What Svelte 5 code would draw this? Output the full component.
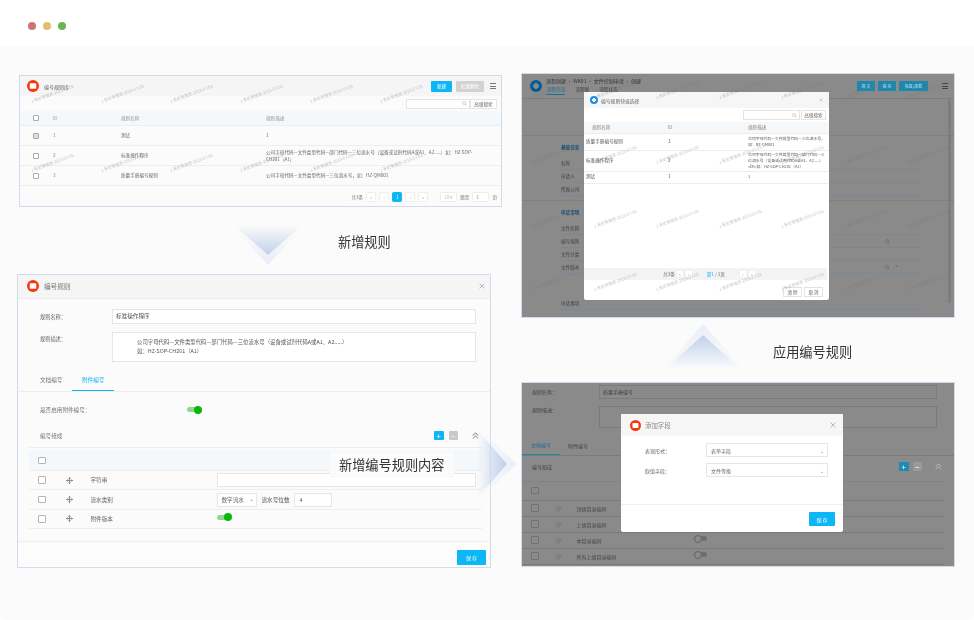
<script lang="ts">
  const markText = '1 系统管理员-2023-07-05';
  const marksA = [0, 1, 2, 3, 4, 5].flatMap((i) => [
    { x: 11 + i * 69.7, y: 22 },
    { x: 11 + i * 69.7, y: 91 },
  ]);
  const marksC = [0, 1, 2, 3, 4, 5, 6].flatMap((i) => [
    { x: 9 + i * 62.6, y: 20 },
    { x: 9 + i * 62.6, y: 85 },
    { x: 9 + i * 62.6, y: 149 },
    { x: 9 + i * 62.6, y: 212 },
  ]);

  const ruleRows = [
    { id: 1, name: '测试', desc: '1', checked: true },
    { id: 2, name: '标准操作程序', desc: '公司字母代码—文件类型代码—部门代码—三位流水号（设备或试剂代码A或A1、A2.....）如：HZ-SOP-CH201（A1）', checked: false },
    { id: 3, name: '质量手册编号规则', desc: '公司字母代码—文件类型代码—三位流水号，如：HZ-QM001', checked: false },
  ];
  const pickRows = [
    { name: '质量手册编号规则', id: 3, desc: '公司字母代码—文件类型代码—三位流水号，如：RZ-QM001', h: 17 },
    { name: '标准操作程序', id: 2, desc: '公司字母代码—文件类型代码—部门代码—三位流水号（设备或试剂代码A或A1、A2.....）<br>如：HZ-SOP-CH201（A1）', h: 20.5 },
    { name: '测试', id: 1, desc: '1', h: 12 },
  ];
  const cFields = ['名称', '申请人', '所属公司'];
  const cFields2 = [
    { label: '文件名称' },
    { label: '编号规则', find: true },
    { label: '文件分类' },
    { label: '文件版本', find: true, star: true },
  ];
  const dRows = ['顶级目录编码', '上级目录编码', '本目录编码', '所有上级目录编码'];
</script>

{#snippet logo(size)}
  <svg class="logo" width={size} height={size} viewBox="0 0 24 24" aria-hidden="true">
    <circle cx="12" cy="12" r="12" fill="#f8350e" />
    <rect x="5.5" y="6.5" width="13" height="11" rx="1.5" fill="#fff" />
  </svg>
{/snippet}

{#snippet move()}
  <svg class="move" width="7" height="7" viewBox="0 0 14 14" fill="none" stroke="#777" stroke-width="1.6" aria-hidden="true">
    <path d="M7 0.5V13.5M0.5 7H13.5M5 3L7 1L9 3M5 11L7 13L9 11M3 5L1 7L3 9M11 5L13 7L11 9" />
  </svg>
{/snippet}

{#snippet cross(size)}
  <svg class="cross" width={size} height={size} viewBox="0 0 10 10" stroke="#999" stroke-width="1.1" aria-hidden="true">
    <path d="M1 1L9 9M9 1L1 9" />
  </svg>
{/snippet}

{#snippet chevUp()}
  <svg width="7" height="7" viewBox="0 0 10 10" fill="none" stroke="#aaa" stroke-width="1.5" aria-hidden="true">
    <path d="M1 5L5 1.5L9 5M1 9L5 5.5L9 9" />
  </svg>
{/snippet}

{#snippet search()}
  <svg width="5" height="5" viewBox="0 0 10 10" fill="none" stroke="#bbb" stroke-width="1.3" aria-hidden="true">
    <circle cx="4" cy="4" r="3" /><path d="M6.5 6.5L9.5 9.5" />
  </svg>
{/snippet}

<div class="page">
  <header class="top">
    <i class="dot red"></i><i class="dot yellow"></i><i class="dot green"></i>
  </header>

  <main class="canvas">
    <!-- list of rules -->
    <section class="shot shot-a">
      {#each marksA as m}
        <span class="mark" style="left:{m.x}px;top:{m.y}px">{markText}</span>
      {/each}
      <div class="a-head">
        {@render logo(12)}
        <span class="a-title">编号规则库</span>
        <span class="a-new">新建</span>
        <span class="a-gray">批量删除</span>
        <span class="menu-ic"><i></i><i></i><i></i></span>
      </div>
      <div class="a-tools">
        <span class="a-search">{@render search()}</span>
        <span class="a-adv">高级搜索</span>
      </div>
      <div class="a-row a-th">
        <i class="box"></i><span>ID</span><span>规则名称</span><span>规则描述</span>
      </div>
      {#each ruleRows as r}
        <div class="a-row">
          <i class="box" class:checked={r.checked}></i><span>{r.id}</span><span class="dk">{r.name}</span><span class="dk a-desc">{r.desc}</span>
        </div>
      {/each}
      <div class="a-pager">
        <span>共3条</span>
        <b class="pg">«</b><b class="pg">‹</b><b class="pg on">1</b><b class="pg">›</b><b class="pg">»</b>
        <b class="pg wide">10 ▾</b>
        <span>跳至</span>
        <b class="pg jump">1</b>
        <span>页</span>
      </div>
    </section>

    <!-- rule editor -->
    <section class="shot shot-b">
      <div class="b-head">
        {@render logo(12)}
        <span class="b-title">编号规则</span>
        {@render cross(6)}
      </div>
      <div class="b-form">
        <div class="b-line"><span class="b-label">规则名称：</span><div class="field">标准操作程序</div></div>
        <div class="b-line top-al">
          <span class="b-label">规则描述：</span>
          <div class="field area">公司字母代码—文件类型代码—部门代码—三位流水号（设备或试剂代码A或A1、A2.....）<br />如：HZ-SOP-CH201（A1）</div>
        </div>
      </div>
      <div class="b-tabs">
        <span>文档编号</span>
        <span class="active">附件编号</span>
      </div>
      <div class="b-switch"><span>是否启用附件编号：</span><i class="toggle on"></i></div>
      <div class="b-comp">
        <span>编号组成</span>
        <b class="sq blue">+</b><b class="sq gray">−</b>
        <span class="chev">{@render chevUp()}</span>
      </div>
      <div class="b-table">
        <div class="b-tr b-th"><i class="box big"></i></div>
        <div class="b-tr"><i class="box big"></i>{@render move()}<span class="nm">字符串</span><div class="inp full"></div></div>
        <div class="b-tr">
          <i class="box big"></i>{@render move()}<span class="nm">流水类别</span>
          <div class="inp sel">数字流水 <em>⌄</em></div><span class="lbl">流水号位数</span><div class="inp num">4</div>
        </div>
        <div class="b-tr short"><i class="box big"></i>{@render move()}<span class="nm">附件版本</span><i class="toggle on up"></i></div>
      </div>
      <div class="b-foot"><span class="save">保 存</span></div>
    </section>

    <!-- applying a rule -->
    <section class="shot dark shot-c">
      {#each marksC as m}
        <span class="mark" style="left:{m.x}px;top:{m.y}px">{markText}</span>
      {/each}
      <div class="c-head">
        <i class="c-logo"></i>
        <div class="c-titles">
          <span class="c-title">流程创建 · WK01 · 文件控制申请 · 创建</span>
          <div class="c-tabs"><span class="active">流程信息</span><span>流程图</span><span>流程状态</span></div>
        </div>
        <b class="c-btn">提 交</b><b class="c-btn">保 存</b><b class="c-btn long">恢复/加载</b>
        <span class="menu-ic dk"><i></i><i></i><i></i></span>
      </div>
      <div class="c-rule first"></div>
      <div class="c-section">基础信息</div>
      {#each cFields as label}
        <div class="c-field"><span>{label}</span></div>
      {/each}
      <div class="c-rule second"></div>
      <div class="c-section">申请事项</div>
      {#each cFields2 as f}
        <div class="c-field">
          <span>{f.label}</span>
          {#if f.find}<span class="c-find">{@render search()}</span>{/if}
          {#if f.star}<span class="c-star">*</span>{/if}
        </div>
      {/each}
      <div class="c-field last"><span>申请事项</span></div>
      <i class="c-scroll"></i>

      <div class="modal c-modal">
        <div class="m-head c">
          <i class="c-logo sm"></i><span>编号规则快速选择</span>{@render cross(4)}
        </div>
        <div class="c-tools">
          <span class="a-search c">{@render search()}</span>
          <span class="a-adv c">高级搜索</span>
        </div>
        <div class="c-tr c-th"><span>规则名称</span><span>ID</span><span>规则描述</span></div>
        {#each pickRows as r}
          <div class="c-tr" style="height:{r.h}px">
            <span>{r.name}</span><span>{r.id}</span><span class="c-desc">{r.desc}</span>
          </div>
        {/each}
        <div class="c-fill"></div>
        <div class="c-pager">
          <span>共3条</span><b class="pg">«</b><b class="pg">‹</b>
          <span class="c-num"><em>第1</em> / 1页</span>
          <b class="pg">›</b><b class="pg">»</b>
        </div>
        <div class="c-foot"><b class="ghost">清 除</b><b class="ghost">取 消</b></div>
      </div>
    </section>

    <!-- add field -->
    <section class="shot dark shot-d">
      <div class="d-line"><span>规则名称：</span><div class="d-inp">质量手册编号</div></div>
      <div class="d-line area"><span>规则描述：</span><div class="d-inp tall"></div></div>
      <div class="d-tabs"><span class="active">文档编号</span><span>附件编号</span></div>
      <div class="d-comp">
        <span>编号组成</span>
        <b class="sq blue dim">+</b><b class="sq gray dim">−</b>
        <span class="chev">{@render chevUp()}</span>
      </div>
      <div class="d-th"><i class="box big"></i></div>
      {#each dRows as name, i}
        <div class="d-tr">
          <i class="box big"></i>{@render move()}<span class="nm">{name}</span>
          {#if i > 1}<i class="toggle off"></i>{/if}
        </div>
      {/each}

      <div class="modal d-modal">
        <div class="m-head d">
          {@render logo(11)}<span>添加字段</span>{@render cross(6)}
        </div>
        <div class="d-form">
          <div class="d-pick"><span>表现形式：</span><div class="inp pick">表单字段 <em>⌄</em></div></div>
          <div class="d-pick"><span>取值字段：</span><div class="inp pick">文件等级 <em>⌄</em></div></div>
        </div>
        <div class="d-foot"><span class="save">保 存</span></div>
      </div>
    </section>

    <!-- arrows -->
    <svg class="arrow ar-down" width="110" height="56" viewBox="0 0 110 56" aria-hidden="true">
      <defs>
        <linearGradient id="gd" x1="0" y1="0" x2="0" y2="1">
          <stop offset="0.3" stop-color="#c0d0ea" stop-opacity="0" />
          <stop offset="1" stop-color="#c0d0ea" />
        </linearGradient>
        <linearGradient id="gdo" x1="0" y1="0" x2="0" y2="1">
          <stop offset="0.4" stop-color="#e6ecf6" stop-opacity="0" />
          <stop offset="1" stop-color="#e6ecf6" />
        </linearGradient>
        <linearGradient id="gu" x1="0" y1="1" x2="0" y2="0">
          <stop offset="0.25" stop-color="#c0d0ea" stop-opacity="0" />
          <stop offset="1" stop-color="#c0d0ea" />
        </linearGradient>
        <linearGradient id="guo" x1="0" y1="1" x2="0" y2="0">
          <stop offset="0.2" stop-color="#e9eef7" stop-opacity="0" />
          <stop offset="1" stop-color="#e9eef7" />
        </linearGradient>
        <linearGradient id="gr" x1="0" y1="0" x2="1" y2="0">
          <stop offset="0.25" stop-color="#c0d0ea" stop-opacity="0" />
          <stop offset="1" stop-color="#c0d0ea" />
        </linearGradient>
        <linearGradient id="gro" x1="0" y1="0" x2="1" y2="0">
          <stop offset="0.3" stop-color="#e9eef7" stop-opacity="0" />
          <stop offset="1" stop-color="#e9eef7" />
        </linearGradient>
      </defs>
      <path d="M7 0H103L55 52Z" fill="url(#gdo)" />
      <path d="M7 0H103L55 42Z" fill="#fbfbfb" />
      <path d="M7 0H103L55 42Z" fill="url(#gd)" />
    </svg>
    <svg class="arrow ar-up" width="110" height="56" viewBox="0 0 110 56" aria-hidden="true">
      <path d="M5 56L55 0L105 56Z" fill="url(#guo)" />
      <path d="M5 56L55 11L105 56Z" fill="#fbfbfb" />
      <path d="M5 56L55 11L105 56Z" fill="url(#gu)" />
    </svg>
    <svg class="arrow ar-right" width="52" height="92" viewBox="0 0 52 92" aria-hidden="true">
      <path d="M0 0L50 46L0 92Z" fill="url(#gro)" />
      <path d="M0 0L40 46L0 92Z" fill="url(#gr)" />
    </svg>

    <span class="cap cap-1">新增规则</span>
    <span class="cap cap-2">新增编号规则内容</span>
    <span class="cap cap-3">应用编号规则</span>
  </main>
</div>

<style>
  :global(body) {
    margin: 0;
    background: #fff;
  }

  .page {
    width: 974px;
    height: 620px;
    display: flex;
    flex-direction: column;
    font-family: "Noto Sans CJK SC", "Liberation Sans", sans-serif;
    color: #555;
    overflow: hidden;
  }

  .top {
    height: 47px;
    flex: none;
    display: flex;
    align-items: center;
    gap: 7px;
    padding: 5px 0 0 28px;
    box-sizing: border-box;
    background: #fff;
  }

  .dot {
    width: 8px;
    height: 8px;
    border-radius: 50%;
    filter: blur(0.3px);
  }
  .red { background: #cd7474; }
  .yellow { background: #e5bd6f; }
  .green { background: #67b755; }

  .canvas {
    position: relative;
    flex: 1;
    background: #fbfbfb;
    border-radius: 0 0 8px 8px;
  }

  .shot {
    position: absolute;
    box-sizing: border-box;
    overflow: hidden;
    border: 1px solid #d0dbed;
    background: #fbfbfb;
    filter: blur(0.5px);
  }
  .dark {
    background: #8a8a8a;
    color: #3f3f3f;
  }

  .shot-a { left: 19px; top: 28px; width: 483px; height: 132px; font-size: 4.6px; }
  .shot-b {
    left: 17px;
    top: 227px;
    width: 474px;
    height: 294px;
    font-size: 5.6px;
    display: flex;
    flex-direction: column;
  }
  .shot-c { left: 521px; top: 26px; width: 434px; height: 245px; font-size: 4.6px; }
  .shot-d { left: 521px; top: 335px; width: 434px; height: 185px; font-size: 5px; }

  .mark {
    position: absolute;
    font-size: 4px;
    white-space: nowrap;
    color: rgba(120, 120, 120, 0.45);
    transform: rotate(-20deg);
    transform-origin: left center;
    z-index: 3;
    pointer-events: none;
  }

  .logo, .cross, .move { flex: none; }

  .box {
    display: block;
    width: 4px;
    height: 4px;
    border: 0.7px solid #aaa;
    border-radius: 1px;
    background: #fff;
    flex: none;
  }
  .box.checked { background: #ddd; }
  .box.big {
    width: 5.5px;
    height: 5.5px;
    border: 0.8px solid #b5b5b5;
  }
  .dark .box { background: transparent; border-color: #707070; }

  .menu-ic {
    display: flex;
    flex-direction: column;
    gap: 1.4px;
    width: 6px;
  }
  .menu-ic i {
    height: 0.8px;
    background: #777;
  }

  /* panel a */
  .a-head {
    height: 20px;
    display: flex;
    align-items: center;
    padding: 0 5px 0 7px;
    background: #f5f5f5;
  }
  .a-title { margin-left: 5px; flex: 1; color: #666; font-size: 5px; }
  .a-new, .a-gray {
    height: 11px;
    display: flex;
    align-items: center;
    justify-content: center;
    border-radius: 1px;
    color: #fff;
    background: #0db7f5;
  }
  .a-new { width: 21px; margin-right: 4px; }
  .a-gray { width: 28px; margin-right: 6px; background: #d2d2d2; }

  .a-tools {
    height: 15px;
    display: flex;
    align-items: center;
    justify-content: flex-end;
    padding-right: 4px;
  }
  .a-search {
    width: 64px;
    height: 10px;
    box-sizing: border-box;
    border: 0.6px solid #e4e4e4;
    display: flex;
    align-items: center;
    justify-content: flex-end;
    padding-right: 2px;
    background: #fff;
  }
  .a-adv {
    width: 27px;
    height: 10px;
    box-sizing: border-box;
    border: 0.6px solid #e4e4e4;
    display: flex;
    align-items: center;
    justify-content: center;
    color: #666;
    background: #fff;
  }

  .a-row {
    display: grid;
    grid-template-columns: 33px 68px 145px 1fr;
    align-items: center;
    height: 20px;
    box-sizing: border-box;
    border-bottom: 0.7px solid #eee;
    color: #888;
    line-height: 7px;
  }
  .a-row .box { margin-left: 13px; }
  .a-th { height: 15px; background: #f4f8fb; color: #999; }
  .dk { color: #666; }
  .a-desc { padding-right: 26px; }

  .a-pager {
    height: 21px;
    display: flex;
    align-items: center;
    justify-content: flex-end;
    gap: 3px;
    padding-right: 4px;
    color: #777;
  }
  .pg {
    width: 10px;
    height: 10px;
    box-sizing: border-box;
    border: 0.6px solid #eee;
    border-radius: 1.5px;
    display: flex;
    align-items: center;
    justify-content: center;
    font-weight: 400;
    color: #bbb;
    background: #fff;
  }
  .pg.on { background: #0db7f5; border-color: #0db7f5; color: #fff; }
  .pg.wide { width: 17px; margin-left: 9px; }
  .pg.jump { width: 17px; justify-content: flex-start; padding-left: 3px; color: #888; }

  /* panel b */
  .b-head {
    height: 23.5px;
    flex: none;
    box-sizing: border-box;
    display: flex;
    align-items: center;
    padding: 0 5px 0 9px;
    background: #f5f5f5;
    border-bottom: 0.7px solid #ececec;
  }
  .b-title { flex: 1; margin-left: 5px; font-size: 6.6px; color: #777; }
  .b-form { padding: 10px 14px 0 22px; flex: none; }
  .b-line {
    display: flex;
    align-items: center;
    margin-bottom: 8px;
  }
  .b-line.top-al { align-items: flex-start; }
  .b-label { width: 72px; flex: none; color: #666; font-size: 5.2px; }
  .top-al .b-label { padding-top: 3px; }
  .field {
    flex: 1;
    height: 15px;
    box-sizing: border-box;
    border: 0.7px solid #e6e6e6;
    background: #fff;
    display: flex;
    align-items: center;
    padding-left: 3px;
    color: #555;
  }
  .field.area {
    display: block;
    height: 30px;
    padding: 5px 0 0 24px;
    line-height: 9px;
    font-size: 5.4px;
  }

  .b-tabs {
    height: 22px;
    flex: none;
    padding-left: 12px;
    display: flex;
    align-items: flex-end;
    border-bottom: 0.7px solid #eee;
    box-sizing: border-box;
    color: #777;
  }
  .b-tabs span {
    padding: 0 10px 6px;
    border-bottom: 1px solid transparent;
    margin-bottom: -0.7px;
    width: 22px;
    text-align: center;
    white-space: nowrap;
  }
  .b-tabs .active { color: #0db7f5; border-color: #0db7f5; }

  .b-switch {
    height: 36px;
    flex: none;
    display: flex;
    align-items: center;
    padding-left: 22px;
    color: #777;
  }
  .b-switch span { width: 147px; }

  .toggle {
    position: relative;
    display: block;
    width: 14px;
    height: 4.5px;
    border-radius: 3px;
    flex: none;
  }
  .toggle::after {
    content: "";
    position: absolute;
    top: -1.75px;
    width: 8px;
    height: 8px;
    border-radius: 50%;
  }
  .toggle.on { background: #8fd68f; }
  .toggle.on::after { right: -1px; background: #07b807; }
  .toggle.up { margin-top: -3px; }
  .toggle.off { background: #6f6f6f; margin-left: 117px; width: 13px; margin-top: -3px; }
  .toggle.off::after { left: 0; background: #8a8a8a; border: 0.7px solid #666; box-sizing: border-box; }

  .b-comp {
    height: 16px;
    flex: none;
    display: flex;
    align-items: center;
    padding-left: 22px;
    color: #777;
  }
  .b-comp > span:first-child { flex: 1; }
  .sq {
    width: 9.5px;
    height: 9.5px;
    margin-right: 5px;
    border-radius: 1px;
    color: #fff;
    display: flex;
    align-items: center;
    justify-content: center;
    font-size: 8px;
    font-weight: 400;
    line-height: 1;
  }
  .sq.blue { background: #0db7f5; }
  .sq.gray { background: #c9c9c9; }
  .sq.blue.dim { background: #1a8bb5; }
  .sq.gray.dim { background: #9a9a9a; }
  .chev { width: 20px; display: flex; align-items: center; padding-left: 9px; box-sizing: border-box; }
  .b-comp .chev { margin-right: 7px; }

  .b-table {
    margin: 3px 8px 0 11px;
    border-top: 0.7px solid #eee;
    padding-top: 3.5px;
    flex: 1;
    min-height: 0;
    overflow: hidden;
    box-sizing: border-box;
  }
  .b-tr {
    height: 19.7px;
    box-sizing: border-box;
    display: flex;
    align-items: center;
    padding-left: 9px;
    border-bottom: 0.7px solid #eee;
  }
  .b-tr.short { height: 18.5px; }
  .b-th { background: #f4f8fb; }
  .move { margin-left: 20px; }
  .nm { width: 126px; margin-left: 18px; color: #666; white-space: nowrap; flex: none; }
  .inp {
    height: 14px;
    box-sizing: border-box;
    border: 0.7px solid #e6e6e6;
    background: #fff;
    display: flex;
    align-items: center;
    padding-left: 4px;
    color: #666;
    white-space: nowrap;
  }
  .inp.full { width: 259px; }
  .inp.sel { width: 40px; justify-content: space-between; padding-right: 2px; }
  .inp em { font-style: normal; color: #888; line-height: 1; }
  .lbl { margin: 0 5px; }
  .inp.num { width: 38px; }

  .b-foot {
    flex: none;
    height: 26px;
    box-sizing: border-box;
    border-top: 0.7px solid #eee;
    display: flex;
    justify-content: flex-end;
    padding: 7.5px 4px 0 0;
    background: #fcfcfc;
  }
  .save {
    width: 29px;
    height: 15.5px;
    display: flex;
    align-items: center;
    justify-content: center;
    background: #0db7f5;
    color: #fff;
    border-radius: 1px;
    font-size: 5px;
  }

  /* modals */
  .modal {
    position: absolute;
    background: #fff;
    border-radius: 2px;
    display: flex;
    flex-direction: column;
    z-index: 2;
    color: #666;
  }
  .m-head {
    display: flex;
    align-items: center;
    background: #f6f6f6;
    flex: none;
  }
  .m-head span { flex: 1; }

  /* panel c */
  .c-head {
    height: 24px;
    display: flex;
    align-items: center;
    padding: 0 6px 0 8px;
    border-bottom: 0.7px solid #7c7c7c;
    gap: 3px;
  }
  .c-logo {
    width: 12px;
    height: 12px;
    border-radius: 50%;
    flex: none;
    background: radial-gradient(circle, #8b8b8b 0 2.5px, #045c94 3px);
  }
  .c-logo.sm {
    width: 8px;
    height: 8px;
    background: radial-gradient(circle, #eaf5ff 0 1.6px, #1a8fe6 2px);
  }
  .c-titles { flex: 1; margin-left: 1px; }
  .c-title { font-size: 5px; color: #333; }
  .c-tabs {
    display: flex;
    gap: 10px;
    margin-top: 2px;
    line-height: 7px;
  }
  .c-tabs span { color: #444; }
  .c-tabs .active { color: #1c6f9b; border-bottom: 0.8px solid #1c6f9b; padding: 0 0 1px 1px; }
  .c-btn {
    width: 18px;
    height: 9.5px;
    display: flex;
    align-items: center;
    justify-content: center;
    background: #1c88ae;
    color: #bfe2ef;
    font-weight: 400;
    font-size: 4px;
  }
  .c-btn.long { width: 29px; margin-right: 11px; }
  .menu-ic.dk i { background: #444; }

  .c-rule { border-top: 0.6px solid #7f7f7f; }
  .c-rule.first { margin-top: 36px; margin-bottom: 5px; }
  .c-rule.second { margin-top: 4px; margin-bottom: 5px; }
  .c-section {
    height: 12px;
    margin: 0 0 4px 39px;
    display: flex;
    align-items: center;
    color: #1d4f74;
    font-weight: 700;
  }
  .c-field {
    height: 13px;
    margin: 0 35px 0 39px;
    display: flex;
    align-items: center;
    border-bottom: 0.6px solid #78889b;
    box-sizing: border-box;
  }
  .c-field.last { margin-top: 23px; }
  .c-find { margin-left: auto; margin-right: 29px; display: flex; }
  .c-find :global(circle), .c-find :global(path) { stroke: #666; }
  .c-star { position: absolute; margin-left: 334px; color: #c63a3a; font-size: 6px; }
  .c-scroll {
    position: absolute;
    right: 3px;
    top: 24px;
    bottom: 14px;
    width: 3px;
    background: #7d7d7d;
  }

  .c-modal { left: 62px; top: 18px; width: 245px; height: 208px; }
  .m-head.c { height: 16px; padding: 0 6px 0 6px; gap: 3px; font-size: 4.8px; }
  .c-tools {
    height: 14px;
    display: flex;
    justify-content: flex-end;
    align-items: center;
    padding-right: 3px;
    flex: none;
    gap: 1px;
  }
  .a-search.c { width: 57px; }
  .a-adv.c { width: 25px; }
  .c-tr {
    display: grid;
    grid-template-columns: 82px 80px 1fr;
    align-items: center;
    flex: none;
    padding-left: 2px;
    box-sizing: border-box;
    border-bottom: 0.6px solid #eee;
    line-height: 5.8px;
    color: #555;
  }
  .c-th { height: 12px; background: #f4f8fb; color: #888; padding-left: 8px; grid-template-columns: 76px 80px 1fr; }
  .c-desc { font-size: 3.9px; padding-right: 2px; }
  .c-fill { flex: 1; }
  .c-pager {
    height: 12px;
    margin-right: 2px;
    background: #f3f3f3;
    display: flex;
    align-items: center;
    padding-left: 79px;
    gap: 1px;
    flex: none;
  }
  .c-pager .pg { width: 8px; height: 8px; }
  .c-num { margin: 0 13px; }
  .c-num em { font-style: normal; color: #0db7f5; }
  .c-foot {
    height: 17px;
    display: flex;
    justify-content: flex-end;
    align-items: flex-end;
    gap: 2px;
    padding: 0 6px 3px 0;
    flex: none;
  }
  .ghost {
    width: 19px;
    height: 10px;
    border: 0.6px solid #e2e2e2;
    box-sizing: border-box;
    display: flex;
    align-items: center;
    justify-content: center;
    font-weight: 400;
    color: #666;
  }

  /* panel d */
  .d-line {
    display: flex;
    align-items: center;
    padding: 2px 17px 0 10px;
  }
  .d-line span { width: 67px; flex: none; }
  .d-line.area { align-items: flex-start; padding-top: 7px; }
  .d-inp {
    flex: 1;
    height: 13.5px;
    border: 0.7px solid #7a7a7a;
    box-sizing: border-box;
    display: flex;
    align-items: center;
    padding-left: 3px;
  }
  .d-inp.tall { height: 22px; }

  .d-tabs {
    height: 28px;
    box-sizing: border-box;
    display: flex;
    align-items: flex-end;
    gap: 8px;
    border-bottom: 0.7px solid #7a7a7a;
  }
  .d-tabs span { padding: 0 10px 6px; }
  .d-tabs .active {
    color: #176d90;
    border-bottom: 1px solid #1b88ae;
    margin-bottom: -0.7px;
    padding: 0 9px 6px;
    margin-right: -10px;
  }
  .d-comp {
    height: 22px;
    display: flex;
    align-items: center;
    padding: 0 8px 0 10px;
  }
  .d-comp > span:first-child { flex: 1; }
  .d-comp .sq { margin-right: 4px; }
  .d-th {
    height: 20px;
    margin: 3px 10px 0 0;
    padding-left: 9px;
    display: flex;
    align-items: center;
    border-bottom: 0.7px solid #7a7a7a;
    border-top: 0.7px solid #838383;
    box-sizing: border-box;
  }
  .d-tr {
    height: 16px;
    margin-right: 10px;
    padding-left: 9px;
    display: flex;
    align-items: center;
    border-bottom: 0.7px solid #7a7a7a;
    box-sizing: border-box;
  }
  .d-tr .move { margin-left: 16px; }
  .d-tr .nm { color: #444; margin-left: 15px; width: 0; }

  .d-modal { left: 99px; top: 31px; width: 222px; height: 118px; }
  .m-head.d { height: 22px; padding: 0 7px 0 9px; gap: 4px; font-size: 6.4px; color: #888; }
  .d-form { flex: 1; padding: 7px 15px 0 24px; border-bottom: 0.7px solid #f0f0f0; }
  .d-pick {
    display: flex;
    align-items: center;
    margin-bottom: 6px;
  }
  .d-pick span { width: 61px; flex: none; }
  .inp.pick { flex: 1; justify-content: space-between; padding-right: 3px; }
  .d-foot {
    height: 27px;
    flex: none;
    display: flex;
    justify-content: flex-end;
    padding: 7px 8px 0 0;
    box-sizing: border-box;
  }
  .d-foot .save { width: 26px; height: 14px; }

  /* arrows and captions */
  .arrow { position: absolute; z-index: 4; filter: blur(0.4px); }
  .ar-down { left: 213px; top: 166px; }
  .ar-up { left: 648px; top: 277px; }
  .ar-right { left: 467px; top: 371px; }

  .cap {
    position: absolute;
    z-index: 5;
    font-size: 13.2px;
    line-height: 18px;
    color: #333;
    white-space: nowrap;
    filter: blur(0.25px);
  }
  .cap-1 { left: 338px; top: 186px; }
  .cap-2 { left: 330px; top: 405px; padding: 4px 9px; background: #fbfbfb; }
  .cap-3 { left: 773px; top: 296px; }
</style>
